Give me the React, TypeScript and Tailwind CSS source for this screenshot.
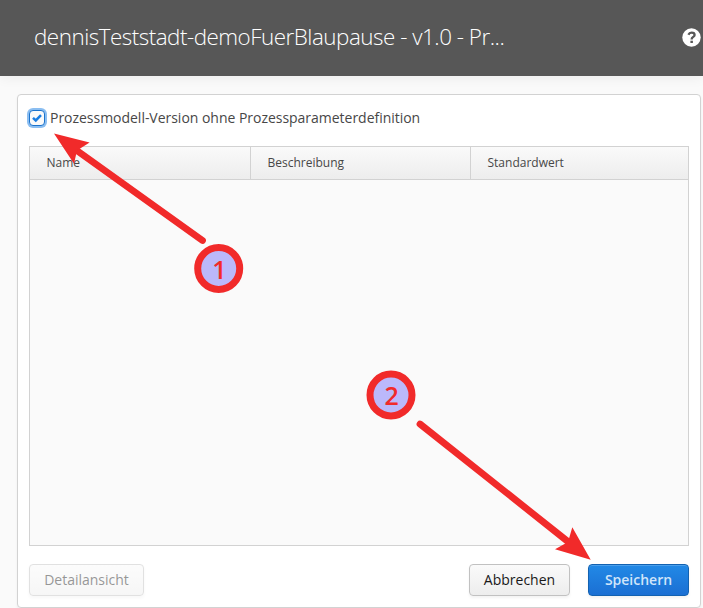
import React from "react";

function Column({ label, className }: { label: string; className: string }) {
  return (
    <div className={`flex items-center pl-[16.5px] text-[12px] leading-none text-[#474747] ${className}`}>
      <span>{label}</span>
    </div>
  );
}

function Marker({ x, y, label }: { x: number; y: number; label: string }) {
  return (
    <g>
      <circle cx={x} cy={y} r={21} fill="#bbb8fb" stroke="#f12a2a" strokeWidth={7} />
      <text x={x + 0.6} y={y + 10} textAnchor="middle" fontSize={25} fontWeight={600} fill="#f12a2a">
        {label}
      </text>
    </g>
  );
}

function Annotations() {
  return (
    <svg
      className="pointer-events-none absolute inset-0 font-['Open_Sans',sans-serif]"
      width="703"
      height="608"
      viewBox="0 0 703 608"
    >
      <path d="M202.5 240.5L74 148.5" stroke="#f12a2a" strokeWidth={6.8} strokeLinecap="round" />
      <path d="M54 133.5L89.6 142.5L77 150.5L74 163.7Z" fill="#f12a2a" />
      <path d="M420 424L571 544" stroke="#f12a2a" strokeWidth={6.8} strokeLinecap="round" />
      <path d="M590.7 559.7L572.3 527.3L568 542L555 549.3Z" fill="#f12a2a" />
      <Marker x={218.7} y={268.5} label="1" />
      <Marker x={391} y={395} label="2" />
    </svg>
  );
}

export default function App() {
  return (
    <div className="relative flex h-[608px] w-[703px] flex-col overflow-hidden bg-[#fafafa] font-['Open_Sans',sans-serif]">
      <header className="flex h-[76px] shrink-0 items-center justify-between bg-[#575757] pl-[34px] pr-[2px] text-white shadow-[0_2px_12px_rgba(0,0,0,0.06)]">
        <h1 className="pb-[2px] text-[22.4px] font-light leading-none tracking-[-0.48px] whitespace-nowrap">
          dennisTeststadt-demoFuerBlaupause - v1.0 - Pr...
        </h1>
        <svg className="mb-[2px]" width="19" height="19" viewBox="0 0 19 19">
          <circle cx="9.5" cy="9.5" r="9.2" fill="#fff" />
          <path
            d="M6.4 6.7C7.1 5.2 8.2 4.6 9.6 4.6C11.4 4.6 12.6 5.6 12.6 6.9C12.6 9 9.6 8.8 9.6 11.4"
            fill="none"
            stroke="#575757"
            strokeWidth="2.3"
          />
          <rect x="8.4" y="12.7" width="2.5" height="2.3" fill="#575757" />
        </svg>
      </header>

      <main className="mt-[18px] ml-[17px] flex h-[514px] w-[684px] shrink-0 flex-col rounded-[4px] border border-[#d2d2d2] bg-white px-[11px] shadow-[0_2px_3px_rgba(0,0,0,0.05)]">
        <label className="mt-[14px] flex h-[18px] items-center text-[14px] leading-none text-[#474747]">
          <span className="flex size-4 shrink-0 items-center justify-center rounded-[4px] border border-[#1b73cc] bg-[#fafafa] shadow-[0_0_0_2px_#8bbef1]">
            <svg width="12" height="10" viewBox="0 0 12 10">
              <path d="M2 4.8L4.8 7.5L10 2.2" fill="none" stroke="#197de1" strokeWidth="2.5" />
            </svg>
          </span>
          <span className="ml-[5px] tracking-[-0.025px] whitespace-nowrap">
            Prozessmodell-Version ohne Prozessparameterdefinition
          </span>
        </label>

        <section className="mt-[19px] flex h-[400px] w-[660px] flex-col border border-[#d2d2d2] bg-[#fafafa]">
          <div className="flex h-[33px] border-b border-[#d2d2d2] bg-linear-to-b from-[#fafafa] to-[#ededed]">
            <Column label="Name" className="w-[221px] border-r border-[#d2d2d2]" />
            <Column label="Beschreibung" className="w-[220px] border-r border-[#d2d2d2]" />
            <Column label="Standardwert" className="flex-1" />
          </div>
        </section>

        <footer className="mt-[18px] flex h-8 w-[660px] items-center text-[14px] leading-none">
          <button
            disabled
            className="h-8 w-[115px] rounded-[4px] border border-[#c5c5c5] bg-linear-to-b from-[#fafafa] to-[#efefef] text-[#303030] opacity-50 shadow-[0_2px_3px_rgba(0,0,0,0.05)]"
          >
            Detailansicht
          </button>
          <button className="ml-auto h-8 w-[101px] rounded-[4px] border border-[#c1c1c1] bg-linear-to-b from-[#fafafa] to-[#ededed] text-[#191919] shadow-[0_2px_3px_rgba(0,0,0,0.05)]">
            Abbrechen
          </button>
          <button className="ml-[18px] h-8 w-[101px] rounded-[4px] border border-[#1362b1] bg-linear-to-b from-[#2289e6] to-[#1b6fd3] font-semibold text-[#d0e5fa] shadow-[inset_0_1px_0_#4b9feb,0_2px_3px_rgba(0,0,0,0.05)]">
            Speichern
          </button>
        </footer>
      </main>
      <Annotations />
    </div>
  );
}
